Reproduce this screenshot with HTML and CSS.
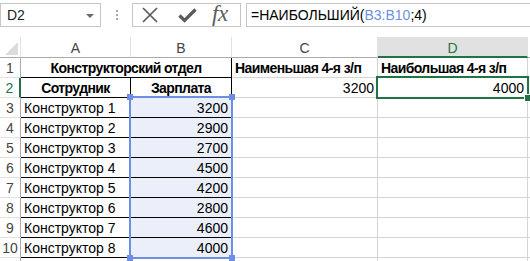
FILE: index.html
```html
<!DOCTYPE html>
<html lang="ru">
<head>
    <meta charset="UTF-8">
    <title>НАИБОЛЬШИЙ</title>
    <link rel="stylesheet" href="styles.css">
</head>
<body>

    <!-- Formula bar -->
    <div class="toolbar">
        <div class="namebox">
            <span>D2</span>
            <span class="caret"></span>
        </div>
        <div class="grip"><i></i><i></i><i></i></div>
        <div class="fbuttons">
            <svg class="ico-x" width="16" height="16" viewBox="0 0 16 16">
                <path d="M1 1 L15 15 M15 1 L1 15" stroke="#5b5b5b" stroke-width="1.7" fill="none"/>
            </svg>
            <svg class="ico-ok" width="19" height="15" viewBox="0 0 19 15">
                <path d="M1.5 7.5 L6.5 12.5 L17.5 1.5" stroke="#5b5b5b" stroke-width="3.2" fill="none"/>
            </svg>
            <span class="fx">fx</span>
        </div>
        <div class="formula">=НАИБОЛЬШИЙ(<span class="ref">B3:B10</span>;4)</div>
    </div>

    <!-- Sheet -->
    <div class="sheet">
        <!-- column headers -->
        <div class="hd corner"></div>
        <div class="hd col">A</div>
        <div class="hd col">B</div>
        <div class="hd col">C</div>
        <div class="hd col active">D</div>
        <div class="hd col"></div>

        <!-- row 1 -->
        <div class="hd row">1</div>
        <div class="c bold center tb tr merged">Конструкторский отдел</div>
        <div class="c bold">Наименьшая 4-я з/п</div>
        <div class="c bold">Наибольшая 4-я з/п</div>
        <div class="c"></div>

        <!-- row 2 -->
        <div class="hd row active">2</div>
        <div class="c bold center tb tr">Сотрудник</div>
        <div class="c bold center tb tr">Зарплата</div>
        <div class="c num">3200</div>
        <div class="c num">4000</div>
        <div class="c"></div>

        <!-- rows 3..10 -->
        <div class="hd row">3</div>
        <div class="c tb tr">Конструктор 1</div>
        <div class="c num tb tr sel">3200</div>
        <div class="c"></div><div class="c"></div><div class="c"></div>

        <div class="hd row">4</div>
        <div class="c tb tr">Конструктор 2</div>
        <div class="c num tb tr sel">2900</div>
        <div class="c"></div><div class="c"></div><div class="c"></div>

        <div class="hd row">5</div>
        <div class="c tb tr">Конструктор 3</div>
        <div class="c num tb tr sel">2700</div>
        <div class="c"></div><div class="c"></div><div class="c"></div>

        <div class="hd row">6</div>
        <div class="c tb tr">Конструктор 4</div>
        <div class="c num tb tr sel">4500</div>
        <div class="c"></div><div class="c"></div><div class="c"></div>

        <div class="hd row">7</div>
        <div class="c tb tr">Конструктор 5</div>
        <div class="c num tb tr sel">4200</div>
        <div class="c"></div><div class="c"></div><div class="c"></div>

        <div class="hd row">8</div>
        <div class="c tb tr">Конструктор 6</div>
        <div class="c num tb tr sel">2800</div>
        <div class="c"></div><div class="c"></div><div class="c"></div>

        <div class="hd row">9</div>
        <div class="c tb tr">Конструктор 7</div>
        <div class="c num tb tr sel">4600</div>
        <div class="c"></div><div class="c"></div><div class="c"></div>

        <div class="hd row">10</div>
        <div class="c tb tr">Конструктор 8</div>
        <div class="c num tb tr sel">4000</div>
        <div class="c"></div><div class="c"></div><div class="c"></div>

        <!-- row 11, only its top edge shows -->
        <div class="hd row"></div>
        <div class="c"></div><div class="c"></div><div class="c"></div><div class="c"></div><div class="c"></div>

        <!-- overlays: formula range and active cell -->
        <div class="range">
            <i class="h tl"></i><i class="h tr2"></i><i class="h bl"></i><i class="h br"></i>
        </div>
        <div class="cursor"><i class="fill"></i></div>
    </div>

</body>
</html>
```

FILE: styles.css
```css
:root {
    --grid: #d4d4d4;
    --head-line: #ababab;
    --text: #000;
    --head-text: #444;
    --green: #217346;
    --blue: #6d8fe3;
    --blue-fill: #eaeffa;
}

* {
    margin: 0;
    padding: 0;
    box-sizing: border-box;
}

body {
    width: 530px;
    height: 261px;
    overflow: hidden;
    background: #fff;
    font-family: "Liberation Sans", Arial, sans-serif;
    font-size: 14px;
    color: var(--text);
}

/* Formula bar */
.toolbar {
    display: flex;
    align-items: center;
    height: 30px;
    padding-top: 3px;
    padding-bottom: 3px;
}

.namebox {
    width: 101px;
    height: 24px;
    border: 1px solid #c6c6c6;
    display: flex;
    align-items: center;
    justify-content: space-between;
    padding: 0 6px 0 6px;
    color: #222;
}

.caret {
    width: 0;
    height: 0;
    border-left: 4px solid transparent;
    border-right: 4px solid transparent;
    border-top: 4px solid #6a6a6a;
    margin-top: 1px;
}

.grip {
    width: 31px;
    display: flex;
    flex-direction: column;
    align-items: center;
    gap: 2px;
}

.grip i {
    width: 2px;
    height: 2px;
    background: #a8a8a8;
}

.fbuttons {
    width: 109px;
    height: 24px;
    border: 1px solid #c6c6c6;
    display: flex;
    align-items: center;
    padding-left: 9px;
}

.ico-x { margin-right: 20px; }
.ico-ok { margin-right: 15px; margin-top: 1px; }

.fx {
    font-family: "Liberation Serif", "Times New Roman", serif;
    font-style: italic;
    font-size: 23px;
    color: #5b5b5b;
    line-height: 1;
    margin-top: -3px;
    letter-spacing: -0.5px;
}

.formula {
    flex: 1;
    height: 24px;
    margin-left: 5px;
    border: 1px solid #c6c6c6;
    border-right: none;
    padding-left: 4px;
    line-height: 22px;
    font-size: 14px;
    white-space: nowrap;
}

.formula .ref { color: var(--blue); }

/* Sheet grid */
.sheet {
    position: relative;
    margin-top: 7px;
    display: grid;
    grid-template-columns: 21px 110px 101px 146px 150px 1fr;
    grid-template-rows: 21px repeat(11, 20px);
}

.hd {
    color: var(--head-text);
    display: flex;
    align-items: center;
    justify-content: center;
    font-size: 14px;
}

.hd.col {
    border-right: 1px solid #e1e1e1;
    border-bottom: 1px solid var(--head-line);
    padding-top: 1px;
}

.hd.col.active {
    background: #e1e1e1;
    color: var(--green);
    border-bottom: 2px solid var(--green);
    padding-top: 2px;
}

.hd.corner {
    position: relative;
    border-right: 1px solid #e1e1e1;
    border-bottom: 1px solid var(--head-line);
}

.hd.corner::after {
    content: '';
    position: absolute;
    right: 2px;
    bottom: 2px;
    width: 13px;
    height: 13px;
    background: #dcdcdc;
    clip-path: polygon(100% 0, 100% 100%, 0 100%);
}

.hd.row {
    border-right: 1px solid var(--head-line);
    border-bottom: 1px solid #e1e1e1;
    padding-top: 1px;
}

.hd.row.active {
    color: var(--green);
    border-right: 2px solid var(--green);
}

.c {
    border-right: 1px solid var(--grid);
    border-bottom: 1px solid var(--grid);
    padding: 2px 3px 0 3px;
    line-height: 17px;
    white-space: nowrap;
    overflow: hidden;
}

.c.bold {
    font-weight: bold;
    letter-spacing: -0.6px;
}
.c.center { text-align: center; }
.c.num { text-align: right; }
.c.merged { grid-column: span 2; }
.c.tb { border-bottom-color: #000; }
.c.tr { border-right-color: #000; }
.c.sel { background: var(--blue-fill); }

/* Formula range B3:B10 */
.range {
    position: absolute;
    grid-column: 3 / 4;
    grid-row: 4 / 12;
    top: -2px;
    left: -2px;
    right: -1px;
    bottom: -1px;
    border: 2px solid var(--blue);
}

.range .h {
    position: absolute;
    width: 6px;
    height: 6px;
    background: var(--blue);
}

.range .tl { top: -4px; left: -4px; }
.range .tr2 { top: -4px; right: -4px; }
.range .bl { bottom: -4px; left: -4px; }
.range .br { bottom: -4px; right: -4px; }

/* Active cell D2 */
.cursor {
    position: absolute;
    grid-column: 5 / 6;
    grid-row: 3 / 4;
    top: -2px;
    left: -2px;
    right: -1px;
    bottom: -1px;
    border: 2px solid var(--green);
}

.cursor .fill {
    position: absolute;
    right: -4px;
    bottom: -4px;
    width: 6px;
    height: 6px;
    background: var(--green);
    outline: 1px solid #fff;
}
```
